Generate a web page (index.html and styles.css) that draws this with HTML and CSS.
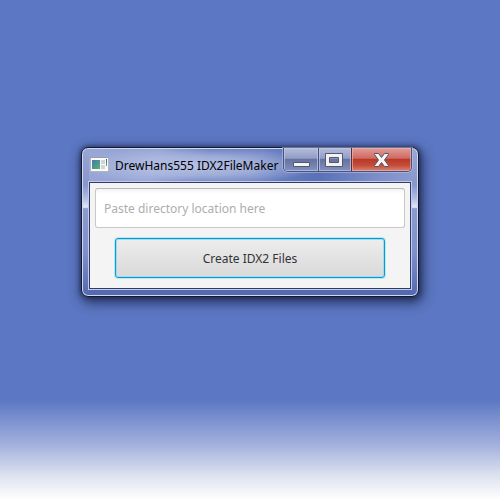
FILE: index.html
```
<!DOCTYPE html>
<html lang="en">
<head>
<meta charset="utf-8">
<title>DrewHans555 IDX2FileMaker</title>
<link rel="stylesheet" href="styles.css">
</head>
<body>
<main class="window">
  <header class="titlebar">
    <svg class="app-icon" width="20" height="18" viewBox="0 0 20 18" aria-hidden="true">
      <defs>
        <linearGradient id="pic" x2="1" y2="1"><stop offset="0" stop-color="#427ca9"/><stop offset="1" stop-color="#58af79"/></linearGradient>
        <linearGradient id="bar" x2="0" y2="1"><stop offset="0" stop-color="#3158a5"/><stop offset="1" stop-color="#55b65f"/></linearGradient>
      </defs>
      <path fill="#fafafa" stroke="#b4b5b4" d="M.5 1.500h18v14h-18z"/>
      <path fill="#9a9da2" d="M0 1h19v1H0z"/>
      <path fill="url(#pic)" d="M2 4h8v9H2z"/>
      <path fill="#d0d3d8" d="M11 4h4v4h-4zM11 9h4v4h-4z"/>
      <path fill="url(#bar)" d="M16 3h1v7h-1z"/>
    </svg>
    <h1 class="title">DrewHans555 IDX2FileMaker</h1>
    <div class="caption-buttons">
      <button class="caption minimize" type="button" aria-label="Minimize">
        <svg width="34" height="23" viewBox="0 0 34 23"><path fill="#f5f5f5" stroke="#535870" d="M9.500 14.500h16v4h-16z"/></svg>
      </button>
      <button class="caption maximize" type="button" aria-label="Maximize">
        <svg width="32" height="23" viewBox="0 0 32 23"><path fill="#f2f2f2" fill-rule="evenodd" stroke="#535870" d="M6.500 5.500h17v13h-17zM10.500 9.500v5h9v-5z"/></svg>
      </button>
      <button class="caption close" type="button" aria-label="Close">
        <svg width="59" height="23" viewBox="0 0 59 23"><path fill="#f5f5f5" stroke="#535666" stroke-linejoin="round" d="M22.500 5.500h4l3 4 3-4h4v1l-4 5.500 4 5.500v1h-4l-3-4-3 4h-4v-1l4-5.500-4-5.500z"/></svg>
      </button>
    </div>
  </header>
  <form class="client">
    <input class="path" type="text" aria-label="Directory location" placeholder="Paste directory location here">
    <button class="create" type="button">Create IDX2 Files</button>
  </form>
</main>
</body>
</html>
```
FILE: styles.css
```
* {
  box-sizing: border-box;
}

body {
  margin: 0;
  min-height: 100vh;
  display: grid;
  align-content: center;
  padding: 0 81px 56px;
  background: linear-gradient(#5c77c3 0, #5c77c3 80%, #a4b1de 89%, #dce1ee 95%, #fff 100%);
  font-family: "Noto Sans", "Open Sans", sans-serif;
  font-size: 12px;
}

.window {
  --sheen: linear-gradient(#98a6d5 0, #8797cc 25%, #b0bce3 34%, #e2e7f7 40%, #8b9bce 41%, #8091ca 70%, #5369b0 100%);
  padding: 0 6px 6px;
  border: 1px solid #15192c;
  border-radius: 7px;
  background:
    var(--sheen) left / 7px 100% no-repeat,
    var(--sheen) right / 7px 100% no-repeat,
    linear-gradient(#5369b0, #5369b0) bottom / 100% 8px no-repeat,
    radial-gradient(ellipse 120px 20px at 115px 18px, #b7c2e4 0, #b7c2e4b0 50%, #b7c2e400 100%) top / 100% 34px no-repeat,
    linear-gradient(105deg, #98a7d7 0, #94a3d5 20%, #5f76bb 34%, #6d82c2 48%, #5a71b7 65%, #7f91cb 82%, #98a6d5 100%);
  box-shadow: inset 0 0 0 1px #d0d8f0, 0 0 4px 1px #10183880, 2px 4px 12px 2px #101838b0;
}

.titlebar {
  display: flex;
  align-items: center;
  height: 34px;
}

.app-icon {
  flex: none;
  margin-left: 2px;
}

.title {
  flex: 1;
  margin: 0 0 0 5px;
  color: #000;
  font-size: 12px;
  font-weight: 400;
  line-height: 20px;
  padding-top: 2px;
  white-space: nowrap;
}

.caption-buttons {
  display: flex;
  align-self: flex-start;
  overflow: hidden;
  border: 1px solid #48517b;
  border-top: 0;
  border-radius: 0 0 5px 5px;
  box-shadow: 0 0 0 1px #c5ceea80;
}

.caption {
  display: grid;
  padding: 0;
  border: 0;
  background: linear-gradient(#b5bdda 0, #919dc6 45%, #65719f 48%, #8391c0 100%);
  box-shadow: inset 0 0 0 1px #c1c9e3b0;
}

.caption + .caption {
  border-left: 1px solid #48517b;
}

.caption + .caption.close {
  border-color: #6b2635;
  background: linear-gradient(#df9c99 0, #d0695f 45%, #b93728 48%, #c44c38 75%, #da8275 100%);
  box-shadow: inset 0 0 0 1px #edb9b5a0;
}

.client {
  display: flex;
  flex-direction: column;
  align-items: center;
  gap: 10px;
  padding: 5px 5px 10px;
  border: 1px solid #303b6b;
  outline: 1px solid #c2cbe8;
  margin: 0 1px 1px;
  background: #f4f4f4;
}

.path,
.create {
  height: 40px;
  font: inherit;
  line-height: 18px;
}

.path {
  width: 100%;
  padding: 1px 8px 0;
  border: 1px solid #c8c8c8;
  border-top-color: #b8b8b8;
  border-radius: 3px;
  background: linear-gradient(#f3f3f3 0, #fff 5px);
  color: #333;
}

.path::placeholder {
  color: #adadad;
  opacity: 1;
}

.create {
  width: calc(100% - 40px);
  padding: 1px 0 0;
  border: 1px solid #039ed3;
  border-radius: 3px;
  background: linear-gradient(#ededed, #d9d9d9);
  box-shadow: 0 0 0 1px #8ed5eb80, inset 0 0 0 1px #a2dbed;
  color: #333;
}
```
